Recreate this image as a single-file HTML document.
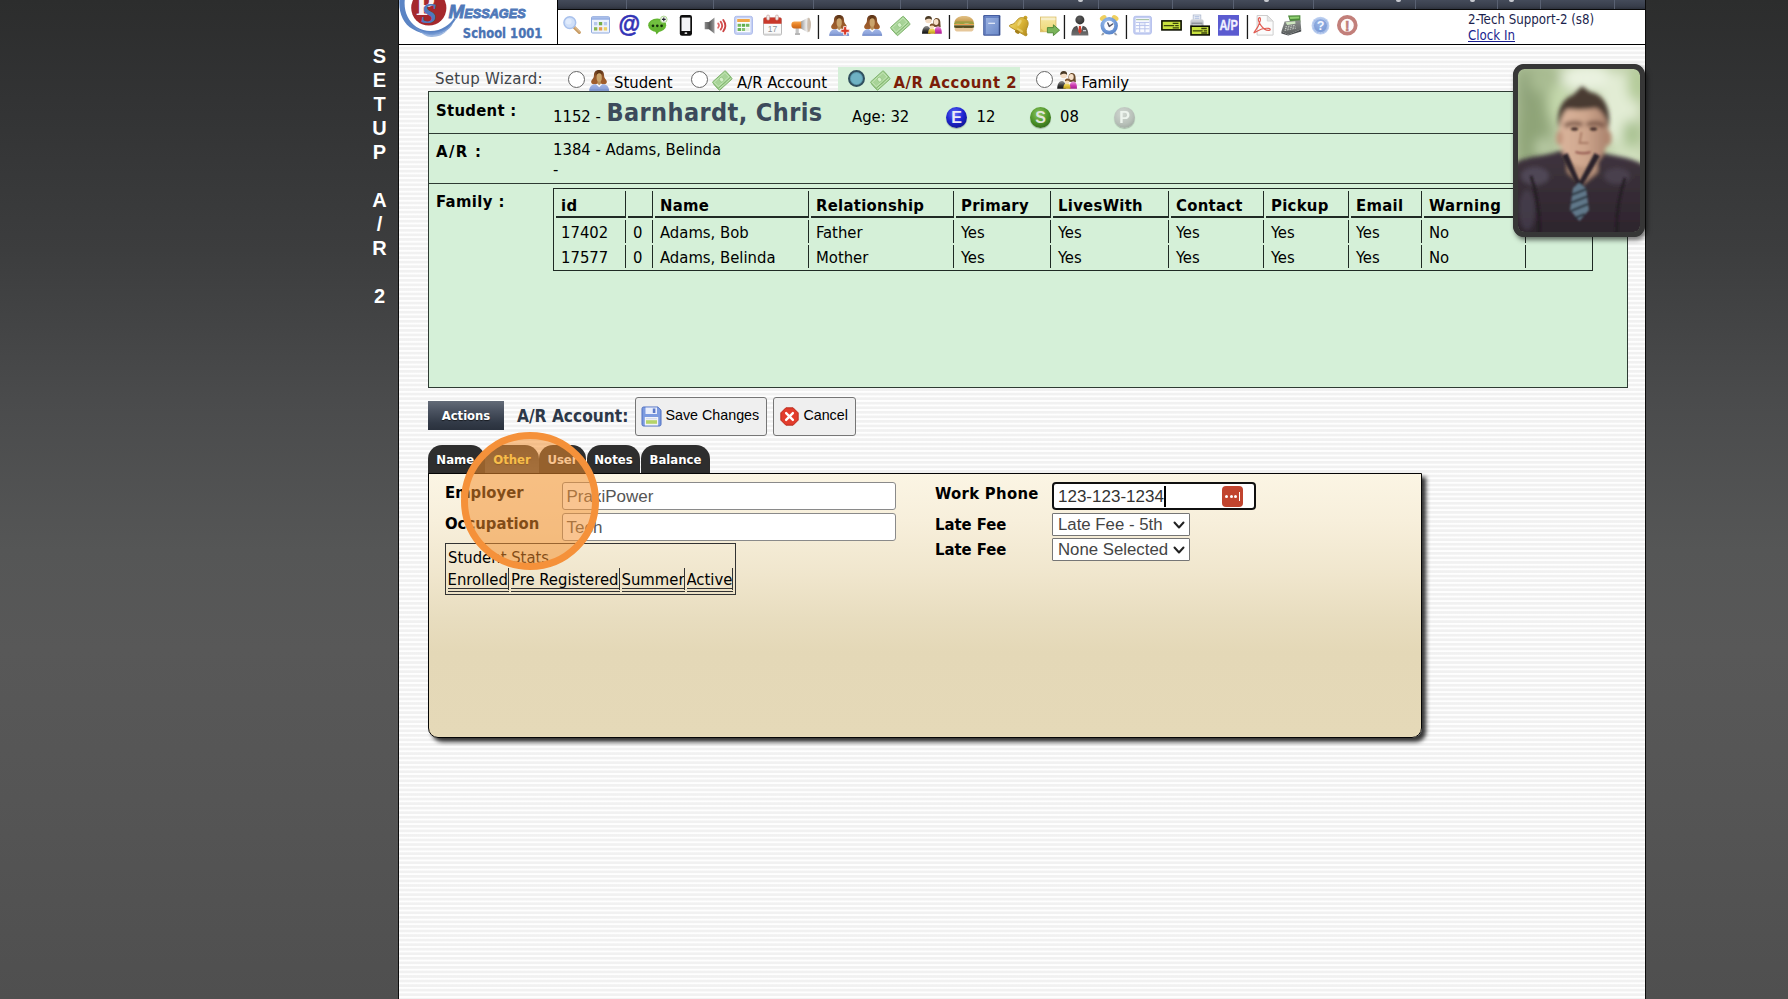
<!DOCTYPE html>
<html lang="en">
<head>
<meta charset="utf-8">
<title>Setup A/R 2</title>
<style>
*{box-sizing:border-box;margin:0;padding:0}
html,body{width:1788px;height:999px;overflow:hidden}
body{position:relative;background:linear-gradient(180deg,#2c2d2d 0px,#323334 100px,#3c3d3e 250px,#4a4b4c 400px,#555656 550px,#585858 650px,#555555 800px,#4f4f4f 999px);font-family:"DejaVu Sans Condensed","Liberation Sans",sans-serif;font-size:16px;color:#000}
.abs{position:absolute;white-space:nowrap}
#page{position:absolute;left:398px;top:0;width:1248px;height:999px;border-left:1px solid #0c0c0c;border-right:1px solid #0c0c0c;background:repeating-linear-gradient(180deg,#fefefe 0px,#fefefe 1px,#f1f1f1 1.900px,#f1f1f1 3.700px,#fefefe 4.550px)}
#side{position:absolute;left:372px;top:44px;width:15px;color:#fff;font-family:"Liberation Sans",sans-serif;font-weight:bold;font-size:20px;line-height:24px;text-align:center;word-break:break-all;overflow-wrap:anywhere;white-space:normal}
/* header */
#logo{position:absolute;left:0;top:0;width:159px;height:45px;background:#fff;border-right:1px solid #000;border-bottom:1px solid #000;overflow:hidden}
#nav{position:absolute;left:159px;top:0;width:1087px;height:10px;background:linear-gradient(180deg,#444b5a 0,#383e4b 70%,#2c313c 100%);border-bottom:1px solid #0a0a0a;overflow:hidden}
#nav i{position:absolute;top:0;width:1px;height:9px;background:#596172}
#tool{position:absolute;left:159px;top:10px;width:1087px;height:35px;background:#fff;border-bottom:1px solid #000}
.sep{position:absolute;top:6px;width:1px;height:24px;background:#222}
.ic{position:absolute;top:5px;width:24px;height:24px}
#user{position:absolute;left:910px;top:2px;font-size:13.2px;line-height:16px;color:#1b1f4d}
#user a{color:#1b1f8f;text-decoration:underline}
/* wizard */
.wz{font-size:16.5px;line-height:20px}
.radio{position:absolute;width:17px;height:17px;border:1.5px solid #666;border-radius:50%;background:#fff}
#green{position:absolute;left:29px;top:91px;width:1200px;height:297px;background:#d5f0d8;border:1px solid #2e3b33}
#green .hr{position:absolute;left:0;width:1198px;height:1px;background:#2e3b33}
.lbl{font-weight:bold;font-size:16px}
table.fam{position:absolute;left:124px;top:96px;border:1px solid #1f2a24;border-collapse:separate;border-spacing:0;font-size:16px}

#wzact{position:absolute;left:439px;top:67px;width:182px;height:25px;background:#d5f0d8}
.radio.sel{width:17px;height:17px;border:2px solid #30505f;background:#6fb2c4;box-shadow:inset 0 0 0 1px #5b9bb0}
#green #sname{left:177.5px;top:5.2px;letter-spacing:.4px;font-size:25px;font-weight:bold;color:#3c4a5b;line-height:32px}
.ball{position:absolute;width:21px;height:21px;border-radius:50%;color:#fff;font-family:"Liberation Sans",sans-serif;font-weight:bold;font-size:16px;line-height:21px;text-align:center;box-shadow:0 1px 1px rgba(0,0,0,.25)}
#green .abs{line-height:20px;font-size:16.5px}
#green .lbl{font-size:16.5px}
table.fam{table-layout:fixed;border-spacing:2px;width:1040px;font-size:16.5px}
table.fam th,table.fam td{border-right:1px solid #1f2a24;text-align:left;padding:0 0 0 5px;white-space:nowrap;overflow:hidden;line-height:20px;vertical-align:top}
table.fam th{letter-spacing:.3px;height:27px;border-bottom:2px solid #1f2a24;font-weight:bold;padding-top:5px}
table.fam td{height:22.7px;padding-top:2.9px}
table.fam .nb{border-right:none}
#photo{position:absolute;left:1114px;top:64px;width:132px;height:173px;border-radius:11px;background:#363636;box-shadow:2px 3px 5px rgba(0,0,0,.55);overflow:hidden}
#actions{position:absolute;left:29px;top:401px;width:76px;height:29px;background:linear-gradient(180deg,#636b78 0,#4a5260 35%,#323a47 75%,#2a313d 100%);color:#fff;font-weight:bold;font-size:12.900px;line-height:30px;text-align:center;text-shadow:0 1px 1px rgba(0,0,0,.6)}
#aracc{left:118px;top:405px;font-weight:bold;font-size:17.2px;line-height:22px;color:#2d3848}
.btn{position:absolute;top:397px;height:38.600px;background:#efefef;border:1px solid #767676;border-radius:3px;font-family:"Liberation Sans",sans-serif;font-size:14.3px;color:#000}
.btn span{position:absolute;top:8.2px;line-height:18px;white-space:nowrap}
.btn svg{position:absolute;left:5px;top:8px;width:21px;height:21px}
.tab{position:absolute;top:445px;height:29px;background:#2e2e2e;color:#fff;font-weight:bold;font-size:13px;line-height:29px;text-align:center;border-radius:14px 14px 0 0;text-shadow:0 1px 1px rgba(0,0,0,.5)}
.tab.on{background:linear-gradient(180deg,#383838,#505050);color:#fff06a}
#panel{position:absolute;left:29px;top:473px;width:994px;height:265px;border:1px solid #050505;border-radius:0 0 10px 10px;background:linear-gradient(180deg,#fbf5e4 0,#f7efdb 18%,#f0e6cd 38%,#e8ddbf 55%,#e4d8b7 68%,#e5d9b8 100%);box-shadow:4px 4px 4px rgba(0,0,0,.8)}
#panel>.in{position:absolute;left:1px;top:1px}
#panel .abs{font-size:16.5px;line-height:20px}
.lbl2{font-weight:bold}
.inp{position:absolute;width:334px;height:27.5px;background:#fff;border:1px solid #8a8a8a;border-radius:3px;font-family:"Liberation Sans",sans-serif;font-size:17px;color:#555}
.inp span{position:absolute;left:3.5px;top:3.6px;line-height:20px}
#stats{position:absolute;left:15px;top:68px;width:291px;height:52px;border:1px solid #333}
.sc{position:absolute;top:24px;height:24px;line-height:20px;padding-top:1.7px;font-size:16.5px;border-right:1px solid #333;border-bottom:4px double #333;white-space:nowrap;overflow:hidden}
#phone{position:absolute;left:622px;top:7px;width:204px;height:28px;background:#fff;border:2px solid #101010;border-radius:4px;font-family:"Liberation Sans",sans-serif;font-size:17px;color:#333}
#phone span{position:absolute;left:4px;top:3px;line-height:20px}
#phone .caret{position:absolute;left:110px;top:2px;width:2px;height:21px;background:#000}
#phone .pw{position:absolute;left:168px;top:2px;width:21px;height:21px;border-radius:4px;background:#c1442e}
#phone .pw u{position:absolute;top:9px;width:3px;height:3px;border-radius:50%;background:#fff}
#phone .pw u:nth-child(1){left:3px}#phone .pw u:nth-child(2){left:7.5px}#phone .pw u:nth-child(3){left:12px}
#phone .pw s{position:absolute;left:16.5px;top:6px;width:1.5px;height:9px;background:#fff}
.dd{position:absolute;left:622px;width:138px;height:23px;background:#fff;border:1px solid #767676;border-radius:1px;font-family:"Liberation Sans",sans-serif;font-size:16.8px;color:#444}
.dd span{position:absolute;left:5px;top:1px;line-height:20px;white-space:nowrap}
.dd svg{position:absolute;right:3px;top:4px;width:14px;height:14px}
#hl{position:absolute;left:61.700px;top:431.500px;width:138px;height:138px;border-radius:50%;border:7px solid #f5913a;background:rgba(244,144,45,.53)}
</style>
</head>
<body>
<div id="side">SETUP&nbsp;A/R&nbsp;2</div>
<div id="page">
  <div id="logo"><svg width="158" height="44" viewBox="0 0 158 44" style="position:absolute;left:0;top:0">
<path d="M6 -2c-1.700 11.500 2 22.500 11.500 29 9 5.600 20 5.400 29-.5 3.500-2.300 6.500-5.200 8.500-8.600l1.900 1c-2.400 4.200-5.700 7.800-9.700 10.300-10 6.200-23.500 6.300-33.200.1C3.500 23.700-.9 11 .6 -2z" fill="#5b84c4"/>
<path d="M14 25.500c8 7.500 22 9.500 33.500 3 2.600-1.500 4.800-3.200 6.500-5-1.600 3.400-4.700 6.400-8.600 8.600-10.400 5.600-24 3.600-31.400-6.600z" fill="#6b92cf" opacity=".9"/>
<path d="M20 30.500c7 4.500 19 5.400 28.500 0-4.500 4.600-10.500 6.800-16.500 6.500-4.800-.3-9-2.600-12-6.500z" fill="#7da0d6" opacity=".75"/>
<circle cx="29.800" cy="8" r="17.600" fill="#a5282c"/>
<text x="17" y="14.500" font-family="Liberation Serif,serif" font-weight="bold" font-size="31" fill="#fbf3f3">P</text>
<text x="22" y="22.500" font-family="Liberation Serif,serif" font-weight="bold" font-style="italic" font-size="29" fill="#4f78bd">S</text>
<g font-family="Liberation Sans,sans-serif" font-weight="bold" font-style="italic" fill="#5079b9" stroke="#5079b9" stroke-width=".85">
<text x="49.500" y="17.800" font-size="18.500" textLength="77.200" lengthAdjust="spacingAndGlyphs">M<tspan font-size="12.400">ESSAGES</tspan></text>
</g>
<text x="63.800" y="38" font-family="DejaVu Sans Condensed,Liberation Sans,sans-serif" font-weight="bold" font-size="13.200" fill="#4a73b3" stroke="#4a73b3" stroke-width=".3" textLength="79.500" lengthAdjust="spacingAndGlyphs">School 1001</text>
</svg></div>
  <div id="nav"><i style="left:68px"></i><i style="left:155px"></i><i style="left:255px"></i><i style="left:342px"></i><i style="left:409px"></i><i style="left:465px"></i><i style="left:540px"></i><i style="left:614px"></i><i style="left:675px"></i><i style="left:755px"></i><i style="left:857px"></i><i style="left:939px"></i><i style="left:982px"></i><i style="left:1056px"></i><b style="position:absolute;left:520px;top:0;width:5px;height:2px;background:#e8eaee;border-radius:0 0 2px 2px;opacity:.8"></b><b style="position:absolute;left:706px;top:0;width:5px;height:2px;background:#e8eaee;border-radius:0 0 2px 2px;opacity:.8"></b><b style="position:absolute;left:838px;top:0;width:5px;height:2px;background:#e8eaee;border-radius:0 0 2px 2px;opacity:.8"></b><b style="position:absolute;left:912px;top:0;width:5px;height:2px;background:#e8eaee;border-radius:0 0 2px 2px;opacity:.8"></b><b style="position:absolute;left:951px;top:0;width:5px;height:2px;background:#e8eaee;border-radius:0 0 2px 2px;opacity:.8"></b></div>
  <div id="tool">
    <svg id="icons" width="1087" height="35" viewBox="0 0 1087 35" style="position:absolute;left:0;top:0"><defs>
<linearGradient id="hair" x1="0" y1="0" x2="0" y2="1"><stop offset="0" stop-color="#5a3218"/><stop offset=".45" stop-color="#93562a"/><stop offset="1" stop-color="#a3602c"/></linearGradient>
<linearGradient id="blu" x1="0" y1="0" x2="0" y2="1"><stop offset="0" stop-color="#a6b9e8"/><stop offset="1" stop-color="#8199d4"/></linearGradient>
<linearGradient id="spk" x1="0" y1="0" x2="1" y2="0"><stop offset="0" stop-color="#8a8a8a"/><stop offset=".5" stop-color="#5a5a5a"/><stop offset="1" stop-color="#9c9c9c"/></linearGradient>
<linearGradient id="horn" x1="0" y1="0" x2="1" y2="0"><stop offset="0" stop-color="#9a9a9a"/><stop offset=".55" stop-color="#ececec"/><stop offset="1" stop-color="#b5a898"/></linearGradient>
<linearGradient id="orng" x1="0" y1="0" x2="0" y2="1"><stop offset="0" stop-color="#f7a64e"/><stop offset=".5" stop-color="#e57e22"/><stop offset="1" stop-color="#c9661a"/></linearGradient>
<linearGradient id="man" x1="0" y1="0" x2="0" y2="1"><stop offset="0" stop-color="#9a9a98"/><stop offset=".55" stop-color="#3a3a3a"/><stop offset="1" stop-color="#0e0e0e"/></linearGradient>
<linearGradient id="wom" x1="0" y1="0" x2="0" y2="1"><stop offset="0" stop-color="#e9a3dc"/><stop offset=".5" stop-color="#cf3bb4"/><stop offset="1" stop-color="#a51e8d"/></linearGradient>
<linearGradient id="kid" x1="0" y1="0" x2="0" y2="1"><stop offset="0" stop-color="#f6e28a"/><stop offset=".5" stop-color="#e0c23a"/><stop offset="1" stop-color="#b8981a"/></linearGradient>
<linearGradient id="bun" x1="0" y1="0" x2="0" y2="1"><stop offset="0" stop-color="#e2c288"/><stop offset=".6" stop-color="#cfa55c"/><stop offset="1" stop-color="#a89a48"/></linearGradient>
<linearGradient id="book" x1="0" y1="0" x2="1" y2="1"><stop offset="0" stop-color="#9db4e2"/><stop offset="1" stop-color="#6b89c8"/></linearGradient>
<linearGradient id="bell" x1="0" y1="0" x2="1" y2="0"><stop offset="0" stop-color="#ecd162"/><stop offset=".5" stop-color="#d9b436"/><stop offset="1" stop-color="#b48c1e"/></linearGradient>
<linearGradient id="note" x1="0" y1="0" x2="0" y2="1"><stop offset="0" stop-color="#f6e8a4"/><stop offset="1" stop-color="#efd878"/></linearGradient>
<radialGradient id="bhead" cx=".4" cy=".35" r=".7"><stop offset="0" stop-color="#5c5c5c"/><stop offset="1" stop-color="#2f2f2f"/></radialGradient>
<linearGradient id="suit" x1="0" y1="0" x2="0" y2="1"><stop offset="0" stop-color="#4a4a4a"/><stop offset="1" stop-color="#707070"/></linearGradient>
<radialGradient id="clk" cx=".4" cy=".3" r=".8"><stop offset="0" stop-color="#9cc0f0"/><stop offset="1" stop-color="#4f7cc4"/></radialGradient>
<linearGradient id="prn" x1="0" y1="0" x2="0" y2="1"><stop offset="0" stop-color="#d4d7dc"/><stop offset="1" stop-color="#9a9ea6"/></linearGradient>
<linearGradient id="reg" x1="0" y1="0" x2="0" y2="1"><stop offset="0" stop-color="#8a8e8c"/><stop offset="1" stop-color="#5a5e5e"/></linearGradient>
<radialGradient id="hlp" cx=".45" cy=".35" r=".75"><stop offset="0" stop-color="#9ab6e6"/><stop offset="1" stop-color="#6f90d0"/></radialGradient>
</defs><rect x="259.8" y="5" width="1.300" height="24" fill="#1a1a1a"/><rect x="390.8" y="5" width="1.300" height="24" fill="#1a1a1a"/><rect x="505.8" y="5" width="1.300" height="24" fill="#1a1a1a"/><rect x="567.8" y="5" width="1.300" height="24" fill="#1a1a1a"/><rect x="688.8" y="5" width="1.300" height="24" fill="#1a1a1a"/><g transform="translate(5.0,5.8)"><path d="M11 11.400L16.300 16.600" stroke="#c79a62" stroke-width="3.200" stroke-linecap="round"/><path d="M11.800 11.400L16.500 16" stroke="#e6c79c" stroke-width="1" stroke-linecap="round"/><circle cx="6.800" cy="6.800" r="5.900" fill="#cfdff8" stroke="#a9c1ec" stroke-width="1.500"/><circle cx="5.600" cy="5.600" r="3" fill="#e3edfc" opacity=".8"/></g><g transform="translate(33.0,6.2)"><rect x=".5" y=".5" width="18" height="16.300" rx="1" fill="#eef3fd" stroke="#8fa9dd"/><rect x="1" y="1" width="17" height="2.600" fill="#9db5e6"/><rect x="3" y="5.800" width="3.300" height="3.300" fill="#b7c8ec"/><rect x="7.900" y="5.800" width="3.300" height="3.300" fill="#74ab45"/><rect x="12.800" y="5.800" width="3.300" height="3.300" fill="#b7c8ec"/><rect x="3" y="11" width="3.300" height="3.300" fill="#86b652"/><rect x="7.900" y="11" width="3.300" height="3.300" fill="#e59a4a"/><rect x="12.800" y="11" width="3.300" height="3.300" fill="#ecd264"/></g><g transform="translate(60.8,5.0)"><text x="-.3" y="16.900" font-family="Liberation Sans,sans-serif" font-weight="bold" font-size="24.300" fill="#3333b6" stroke="#3333b6" stroke-width=".6" textLength="21.600" lengthAdjust="spacingAndGlyphs">@</text></g><g transform="translate(90.0,5.4)"><path d="M7 15.200l1.600 4 3.600-4.200z" fill="#5cae2c"/><ellipse cx="9.200" cy="9.800" rx="9" ry="6.700" fill="#63b531"/><ellipse cx="8.600" cy="7.800" rx="6.500" ry="3.200" fill="#7cc84a" opacity=".6"/><circle cx="5" cy="10.400" r="1.350" fill="#14300a"/><circle cx="9.300" cy="10.400" r="1.350" fill="#14300a"/><circle cx="13.600" cy="10.400" r="1.350" fill="#14300a"/><circle cx="15.800" cy="4" r="3.300" fill="#f4faef" stroke="#a7d48a" stroke-width=".9"/><path d="M15.800 2.100v3.800M13.900 4h3.800" stroke="#223" stroke-width="1.100"/></g><g transform="translate(121.8,5.0)"><rect x="0" y="0" width="12.200" height="20.800" rx="2.200" fill="#0e0e0e"/><rect x="1.700" y="2.600" width="8.800" height="13.400" fill="#f3f3f5"/><rect x="4.800" y="17.300" width="2.600" height="1.800" rx=".6" fill="#d8d8d8"/></g><g transform="translate(146.7,7.4)"><path d="M0 4.600h4.200L9.800 0v16.400L4.200 11.800H0z" fill="url(#spk)"/><path d="M13.40 6.01A3.4 3.4 0 0 1 13.40 10.39" fill="none" stroke="#dd6c6c" stroke-width="1.700" stroke-linecap="round"/><path d="M15.92 4.20A6.5 6.5 0 0 1 15.92 12.20" fill="none" stroke="#d45252" stroke-width="1.800" stroke-linecap="round"/><path d="M18.57 2.56A9.6 9.6 0 0 1 18.57 13.84" fill="none" stroke="#cb4343" stroke-width="1.900" stroke-linecap="round"/></g><g transform="translate(176.0,5.8)"><rect x=".5" y=".5" width="18" height="18" rx="2" fill="#c5d0f3" stroke="#aebcec"/><rect x="2.600" y="2.600" width="13.800" height="13.800" fill="#fbfcff"/><rect x="3.200" y="3.200" width="12.600" height="3" fill="#f0a648"/><rect x="3.600" y="8" width="3.400" height="3" fill="#74b85e"/><rect x="7.800" y="8" width="3.400" height="3" fill="#5fae4c"/><rect x="12" y="8" width="3.400" height="3" fill="#74b85e"/><rect x="3.600" y="12.200" width="3.400" height="3" fill="#6ab456"/><rect x="7.800" y="12.200" width="3.400" height="3" fill="#86c270"/><rect x="12" y="12.200" width="3.400" height="3" fill="#e8f0e4"/></g><g transform="translate(205.0,5.0)"><rect x=".5" y="3" width="18" height="17" rx="1.200" fill="#fafafa" stroke="#b9b9b9"/><path d="M.5 8.800V4a1.500 1.500 0 0 1 1.500-1.500h15a1.500 1.500 0 0 1 1.500 1.500v4.800z" fill="#c9382a"/><rect x="3.600" y="0" width="3" height="5.200" rx="1.400" fill="#f1e9e7" stroke="#b98a84" stroke-width=".5"/><rect x="12.400" y="0" width="3" height="5.200" rx="1.400" fill="#f1e9e7" stroke="#b98a84" stroke-width=".5"/><text x="9.500" y="17" text-anchor="middle" font-family="Liberation Sans,sans-serif" font-size="8.500" fill="#8e9498">17</text><rect x="1" y="18.600" width="17" height="1.400" fill="#cfcfcf"/></g><g transform="translate(232.8,7.4)"><rect x="4.800" y="9.800" width="3.200" height="6.600" rx=".8" fill="#c4c4c4"/><rect x="4.200" y="15.600" width="5" height="2" rx=".6" fill="#b5b5b5"/><path d="M10 4.200L17.600 0c1.900 2 2.600 5 2.300 8-.3 3-1.300 5.400-2.800 7L10 11z" fill="url(#horn)"/><ellipse cx="18.200" cy="7.600" rx="1.700" ry="7.200" fill="#c9b9a9" opacity=".8"/><path d="M.6 7.600c0-2.400 1.200-3.400 3-3.400H10.400v6.800H3.600c-1.800 0-3-1-3-3.400z" fill="url(#orng)"/></g><g transform="translate(271.0,5.0)"><path d="M10 0C6.500 0 5 2.200 5 5c0 2.500-1.200 3.600-2.200 5-1.200 1.600-.8 3.700 1.200 4.300h12c2-.6 2.400-2.700 1.200-4.300-1-1.400-2.200-2.500-2.200-5 0-2.800-1.500-5-5-5z" fill="url(#hair)"/>
<rect x="8.500" y="10.500" width="3.400" height="5.500" fill="#b8905a"/>
<ellipse cx="10.200" cy="7.400" rx="2.600" ry="4.400" fill="#caa46c"/>
<path d="M7.500 5c.9-2 4.300-2.300 5.400-.3C12.800 2.200 11.700 1 10.200 1 8.500 1 7.400 2.400 7.500 5z" fill="#5f3716"/>
<path d="M.3 20.700c0-4.200 2.300-6.100 6.200-6.700l3.700 1.700 3.700-1.700c3.900.6 6.200 2.500 6.200 6.700z" fill="url(#blu)"/>
<path d="M.3 19.600h19.800v1.100H.3z" fill="#6f87c4" opacity=".8"/>
<path d="M7.100 14.300l3.100 3 3.100-3-1.300-.7-1.800 1.700-1.800-1.700z" fill="#f6f8fc"/><path d="M14.600 11.600h3v2.700h2.700v3h-2.700v2.700h-3v-2.700h-2.700v-3h2.700z" fill="#d93a28" stroke="#fbeeee" stroke-width=".9"/></g><g transform="translate(304.0,5.0)"><path d="M10 0C6.500 0 5 2.200 5 5c0 2.500-1.200 3.600-2.200 5-1.200 1.600-.8 3.700 1.200 4.300h12c2-.6 2.400-2.700 1.200-4.300-1-1.400-2.200-2.500-2.200-5 0-2.800-1.500-5-5-5z" fill="url(#hair)"/>
<rect x="8.500" y="10.500" width="3.400" height="5.500" fill="#b8905a"/>
<ellipse cx="10.200" cy="7.400" rx="2.600" ry="4.400" fill="#caa46c"/>
<path d="M7.500 5c.9-2 4.300-2.300 5.400-.3C12.800 2.200 11.700 1 10.200 1 8.500 1 7.400 2.400 7.500 5z" fill="#5f3716"/>
<path d="M.3 20.700c0-4.200 2.300-6.100 6.200-6.700l3.700 1.700 3.700-1.700c3.900.6 6.200 2.500 6.200 6.700z" fill="url(#blu)"/>
<path d="M.3 19.600h19.800v1.100H.3z" fill="#6f87c4" opacity=".8"/>
<path d="M7.100 14.300l3.100 3 3.100-3-1.300-.7-1.800 1.700-1.800-1.700z" fill="#f6f8fc"/></g><g transform="translate(332.0,5.4)"><g transform="translate(11,11.400) rotate(-42)"><rect x="-8.700" y="-4.300" width="17.400" height="8.600" rx=".7" fill="#a7d397" stroke="#7fb36c" stroke-width=".9"/><rect x="-7.200" y="-2.900" width="14.400" height="5.800" fill="none" stroke="#c6e6b8" stroke-width=".8"/><ellipse cx="0" cy="0" rx="2.100" ry="2.500" fill="#d4efc8" stroke="#86bd74" stroke-width=".6"/></g><g transform="translate(9.600,9.600) rotate(-42)"><rect x="-8.700" y="-4.300" width="17.400" height="8.600" rx=".7" fill="#a7d397" stroke="#7fb36c" stroke-width=".9"/><rect x="-7.200" y="-2.900" width="14.400" height="5.800" fill="none" stroke="#c6e6b8" stroke-width=".8"/><ellipse cx="0" cy="0" rx="2.100" ry="2.500" fill="#d4efc8" stroke="#86bd74" stroke-width=".6"/></g></g><g transform="translate(363.8,6.0)"><path d="M.2 17.800C.2 12.600 2.400 10 4.900 10c2.400 0 3.800 2.200 3.800 7.800z" fill="url(#man)"/>
<circle cx="6.700" cy="4" r="3.300" fill="#f3dcc4"/><path d="M3.300 4.100C2.900 1.400 4.700-.1 6.900 0c2.200.1 3.500 1.500 3.200 3.800-1.300-1.200-4-1.700-6.800.3z" fill="#4a3a26"/>
<path d="M11.600 8.200c-.5-4 1-6.200 3.400-6.100 2.700.1 3.800 2.400 3.600 5.600l.3 3.600-2.300-.6-4.600.2z" fill="#6a4a2a"/><ellipse cx="14.300" cy="6" rx="2.400" ry="2.900" fill="#f6e0c8"/>
<path d="M12.500 17.800c0-5 1.500-7.200 3.800-7.200 2.400 0 3.700 2.300 3.700 7.200z" fill="url(#wom)"/>
<path d="M6.300 17.800c0-3.900 1.400-5.600 3.700-5.600s3.500 1.700 3.500 5.600z" fill="url(#kid)"/><circle cx="10.200" cy="10.400" r="2.250" fill="#f6dcb8"/><path d="M7.900 10.200c0-1.900 1.100-2.800 2.400-2.700 1.400.1 2.300 1 2.200 2.800-1.100-1-2.900-1.200-4.600-.1z" fill="#7a4e26"/></g><g transform="translate(395.9,5.8)"><path d="M.4 7.600C.4 2.800 4.400.2 10.200.2s9.800 2.600 9.800 7.400z" fill="url(#bun)"/><path d="M2 5.500h16.500l1.300 2.100H.6z" fill="#8f9a3c" opacity=".55"/><path d="M.2 7.400c2-.8 3.500.6 5 0s3-.8 5 0 3.200.7 5 0 3.200-.8 5 0v1.600H.2z" fill="#9aa23e"/><rect x=".4" y="8.200" width="19.600" height="1.300" fill="#f2c25a"/><rect x=".8" y="8.500" width="18.800" height=".6" fill="#e8784a" opacity=".8"/><path d="M.2 9.500h20v2.300c-1.800.8-3.200.1-5 .6s-3 .2-5-.3-3.200.6-5 .2-3.400.2-5-.5z" fill="#56632a"/><rect x=".8" y="10.300" width="18.600" height="1.500" rx=".7" fill="#5c4320" opacity=".85"/><path d="M.8 12.200h18.800v1.200c0 1.500-1.400 2.300-3.200 2.300H4c-1.800 0-3.200-.8-3.200-2.300z" fill="#e6c79a"/></g><g transform="translate(425.2,5.0)"><rect x="0" y="0" width="17.200" height="20.800" rx="1.200" fill="#425a9c"/><rect x="1.300" y="2.600" width="14.600" height="16.900" fill="url(#book)"/><rect x="1.300" y=".9" width="15" height="1.900" fill="#6a86c8"/><rect x="1.300" y="2.600" width="1.400" height="16.900" fill="#5b76ba" opacity=".8"/><rect x="5" y="7.700" width="6.800" height="1.200" fill="#e6edfa"/><rect x="15.600" y="1" width="1" height="18.800" fill="#34497f"/></g><g transform="translate(453.0,5.0)"><g transform="rotate(30 10 10.500)"><circle cx="10" cy="1.600" r="2" fill="#c9a22a"/><path d="M10 2.400c-4 0-6 2.800-6.200 6.200-.2 3.200-1.400 5-3.200 6.400-1 .8-.6 2.200.8 2.200h17.200c1.400 0 1.800-1.400.8-2.200-1.800-1.400-3-3.200-3.200-6.400-.2-3.400-2.200-6.200-6.200-6.200z" fill="url(#bell)" stroke="#ad8a1e" stroke-width=".8"/><ellipse cx="10" cy="17.800" rx="2.600" ry="1.700" fill="#a5801a"/><ellipse cx="7.400" cy="9" rx="1.400" ry="3.400" fill="#f6e89a" opacity=".55"/><ellipse cx="11.500" cy="15.200" rx="3.500" ry="1.100" fill="#f3e08a" opacity=".55"/></g></g><g transform="translate(482.0,5.8)"><rect x=".5" y="1.300" width="15.400" height="14.600" fill="url(#note)" stroke="#dcc070"/><rect x="1" y="1.800" width="14.400" height="2.600" fill="#f8efc8"/><path d="M1 12.600l3.400 3H1z" fill="#dcc060"/><path d="M7.400 11.800h6V9l6.200 5.400-6.200 5.400V17h-6z" fill="#7ab45a" stroke="#4c8532" stroke-width=".9" stroke-linejoin="round"/></g><g transform="translate(513.4,5.0)"><circle cx="8.500" cy="4.900" r="4.500" fill="url(#bhead)"/><path d="M0 20.400c0-5.800 2-8.800 5.600-9.600l2.900 1.600 2.900-1.600c3.600.8 5.600 3.800 5.600 9.600z" fill="url(#suit)"/><path d="M5.800 10.900l2.700 8 2.700-8-1.300-.8H7.100z" fill="#f3f3f3"/><path d="M7.600 11h1.800l.8 5.200-1.700 3-1.700-3z" fill="#d23b2b"/><rect x="11.600" y="15" width="3" height="1.300" fill="#c9ccd2"/></g><g transform="translate(541.2,5.0)"><path d="M3.600 17.600l-1.800 2.600h2.200l1.400-1.800zM16.400 17.600l1.800 2.600H16l-1.400-1.800z" fill="#9a9fa8"/><ellipse cx="4" cy="3" rx="3.600" ry="2.500" transform="rotate(-35 4 3)" fill="#efd060"/><ellipse cx="16" cy="3" rx="3.600" ry="2.500" transform="rotate(35 16 3)" fill="#efd060"/><circle cx="10" cy="10.800" r="8.700" fill="url(#clk)"/><circle cx="10" cy="10.800" r="5" fill="#fbfcff"/><path d="M8.600 8l1.500 3.400 3.400-2.400" fill="none" stroke="#50556a" stroke-width="1.500" stroke-linecap="round" stroke-linejoin="round"/></g><g transform="translate(575.3,5.8)"><rect x=".5" y=".5" width="17.600" height="17.800" rx="1.800" fill="#c3cdf2" stroke="#b3bfec"/><rect x="2.400" y="2.400" width="13.800" height="14" fill="#fbfcff"/><rect x="2.800" y="3.200" width="13" height="1.200" fill="#a9c3a6"/><path d="M2.600 6.600h13.400M2.600 9.800h13.400M2.600 13h13.400M6.400 6.600v9.600M11.600 6.600v9.600" stroke="#b7c2ec" stroke-width="1"/><rect x="7.200" y="7.400" width="3.600" height="1.600" fill="#dfe5f8"/></g><g transform="translate(603.1,10.1)"><rect x=".8" y=".8" width="19.2" height="9.0" fill="#c9e23f" stroke="#0c0f00" stroke-width="1.600"/><path d="M11.6 3.2h5.8M2.7 5.5h10.4M14.1 5.5h3.5M11.6 7.8h6.2" stroke="#2a3208" stroke-width="1.300" fill="none" opacity=".9"/></g><g transform="translate(632.0,5.0)"><rect x="3.200" y="0" width="7.600" height="5.600" fill="#f2f5fb" stroke="#aab6cc" stroke-width=".8"/><path d="M4.600 1.700h4.800M4.600 3.300h4.800" stroke="#9db0d8" stroke-width=".8"/><path d="M.4 6.400c0-1.300.8-2.200 2.100-2.200h9c1.300 0 2.100.9 2.100 2.200v7H.4z" fill="url(#prn)"/><rect x="1.600" y="7.600" width="10.800" height="1.500" fill="#8f949c"/><rect x="2.600" y="9.700" width="8.800" height="1.300" fill="#eef0f4"/><g transform="translate(0.200,10.400)"><rect x=".8" y=".8" width="18.2" height="8.7" fill="#c9e23f" stroke="#0c0f00" stroke-width="1.600"/><path d="M11.1 3.1h5.5M2.6 5.4h9.9M13.5 5.4h3.4M11.1 7.6h5.9" stroke="#2a3208" stroke-width="1.300" fill="none" opacity=".9"/></g></g><g transform="translate(660.0,5.0)"><rect x="0" y="0" width="21" height="20.700" fill="#5b5bd0"/><text x="10.600" y="15" text-anchor="middle" font-family="Liberation Sans,sans-serif" font-weight="bold" font-size="13.800" fill="#f1f1ff" stroke="#f1f1ff" stroke-width=".35" textLength="18.400" lengthAdjust="spacingAndGlyphs">A/P</text></g><g transform="translate(695.5,5.0)"><path d="M3.600.5h10.200l5.800 5.600v14H3.600z" fill="#fbfbfb" stroke="#cdcdcd"/><path d="M13.800.5v5.600h5.800z" fill="#e6e6e6" stroke="#cdcdcd" stroke-width=".7"/><path d="M.6 17.400c2.400-3 5.200-7.600 6.200-11.800.5-2.200-.4-3.600-1.400-2.600-.9 1-.2 4.200 2 7.400 2.200 3.200 5.600 5.200 8.200 5 1.700-.2 1.500-1.700-.4-2-3.200-.5-8.400.8-12.200 3.200-1.700 1.100-3 1.600-2.400.8z" fill="none" stroke="#de4a40" stroke-width="1.150" stroke-linejoin="round" opacity=".9"/></g><g transform="translate(723.0,5.0)"><path d="M7 .6l12.400-.4v7.400l-9.600 1.200z" fill="#4d8a3c"/><path d="M8.600 1.700l9.600-.3v2l-9 .6z" fill="#8fd070"/><path d="M3.600 6.400l15.800-1.200.8 9-13 5.600-6.800-3.400z" fill="url(#reg)"/><path d="M4.600 7.200l9.600-.9.300 2.500-8.400 1.300z" fill="#cfe8c0"/><path d="M.4 16.400l6.800 3.400 13-5.600v2.400l-13 3.800-6.800-2z" fill="#4a4e50"/><path d="M4.400 11.800l10-1.600M4 13.600l10.600-1.900M3.600 15.400l11.200-2.200" stroke="#c6cac4" stroke-width="1" stroke-dasharray="1.600 1"/></g><g transform="translate(753.4,6.6)"><circle cx="9.050" cy="9.050" r="8.900" fill="#bccff0"/><circle cx="9.050" cy="9.050" r="7.500" fill="url(#hlp)"/><circle cx="9.050" cy="9.050" r="7" fill="none" stroke="#d6e3f8" stroke-width=".8" opacity=".8"/><text x="9.100" y="13.500" text-anchor="middle" font-family="Liberation Sans,sans-serif" font-weight="bold" font-size="12.500" fill="#f4f8ff">?</text></g><g transform="translate(779.0,5.0)"><circle cx="10.300" cy="10.300" r="8.400" fill="#fdfafa" stroke="#c27f7a" stroke-width="3.800"/><text x="10.300" y="15.600" text-anchor="middle" font-family="Liberation Sans,sans-serif" font-weight="bold" font-size="15" fill="#c27f7a" stroke="#c27f7a" stroke-width=".5">!</text></g></svg>
    <div id="user">2-Tech Support-2 (s8)<br><a>Clock In</a></div>
  </div>

  <!-- wizard row -->
  <div class="abs wz" style="left:36px;top:68.800px;color:#3f4449;font-family:'DejaVu Sans',sans-serif;font-size:15px;letter-spacing:.25px">Setup Wizard:</div>
  <div id="wzact"></div>
  <div class="radio" style="left:169px;top:71px"></div>
  <div class="abs wz" style="left:215px;top:73px">Student</div>
  <div class="radio" style="left:292px;top:71px"></div>
  <div class="abs wz" style="left:338px;top:73px">A/R Account</div>
  <div class="radio sel" style="left:449px;top:70px"></div>
  <div class="abs wz" style="left:494.5px;top:73px;font-weight:bold;color:#7a1d08;letter-spacing:.55px">A/R Account 2</div>
  <div class="radio" style="left:637px;top:71px"></div>
  <div class="abs wz" style="left:682.5px;top:73px">Family</div>
  <svg class="wzi" width="21" height="21" viewBox="0 0 21 21" style="position:absolute;left:189.7px;top:69.9px;overflow:visible"><path d="M10 0C6.500 0 5 2.200 5 5c0 2.500-1.200 3.600-2.200 5-1.200 1.600-.8 3.700 1.200 4.300h12c2-.6 2.400-2.700 1.200-4.300-1-1.400-2.200-2.500-2.200-5 0-2.800-1.500-5-5-5z" fill="url(#hair)"/>
<rect x="8.500" y="10.500" width="3.400" height="5.500" fill="#b8905a"/>
<ellipse cx="10.200" cy="7.400" rx="2.600" ry="4.400" fill="#caa46c"/>
<path d="M7.500 5c.9-2 4.300-2.300 5.400-.3C12.800 2.200 11.700 1 10.200 1 8.500 1 7.400 2.400 7.500 5z" fill="#5f3716"/>
<path d="M.3 20.700c0-4.200 2.300-6.100 6.200-6.700l3.700 1.700 3.700-1.700c3.900.6 6.200 2.500 6.200 6.700z" fill="url(#blu)"/>
<path d="M.3 19.600h19.800v1.100H.3z" fill="#6f87c4" opacity=".8"/>
<path d="M7.100 14.300l3.100 3 3.100-3-1.300-.7-1.800 1.700-1.800-1.700z" fill="#f6f8fc"/></svg><svg class="wzi" width="21" height="21" viewBox="0 0 21 21" style="position:absolute;left:313.0px;top:70.4px;overflow:visible"><g transform="translate(11,11.400) rotate(-42)"><rect x="-8.700" y="-4.300" width="17.400" height="8.600" rx=".7" fill="#a7d397" stroke="#7fb36c" stroke-width=".9"/><rect x="-7.200" y="-2.900" width="14.400" height="5.800" fill="none" stroke="#c6e6b8" stroke-width=".8"/><ellipse cx="0" cy="0" rx="2.100" ry="2.500" fill="#d4efc8" stroke="#86bd74" stroke-width=".6"/></g><g transform="translate(9.600,9.600) rotate(-42)"><rect x="-8.700" y="-4.300" width="17.400" height="8.600" rx=".7" fill="#a7d397" stroke="#7fb36c" stroke-width=".9"/><rect x="-7.200" y="-2.900" width="14.400" height="5.800" fill="none" stroke="#c6e6b8" stroke-width=".8"/><ellipse cx="0" cy="0" rx="2.100" ry="2.500" fill="#d4efc8" stroke="#86bd74" stroke-width=".6"/></g></svg><svg class="wzi" width="21" height="21" viewBox="0 0 21 21" style="position:absolute;left:471.0px;top:70.4px;overflow:visible"><g transform="translate(11,11.400) rotate(-42)"><rect x="-8.700" y="-4.300" width="17.400" height="8.600" rx=".7" fill="#a7d397" stroke="#7fb36c" stroke-width=".9"/><rect x="-7.200" y="-2.900" width="14.400" height="5.800" fill="none" stroke="#c6e6b8" stroke-width=".8"/><ellipse cx="0" cy="0" rx="2.100" ry="2.500" fill="#d4efc8" stroke="#86bd74" stroke-width=".6"/></g><g transform="translate(9.600,9.600) rotate(-42)"><rect x="-8.700" y="-4.300" width="17.400" height="8.600" rx=".7" fill="#a7d397" stroke="#7fb36c" stroke-width=".9"/><rect x="-7.200" y="-2.900" width="14.400" height="5.800" fill="none" stroke="#c6e6b8" stroke-width=".8"/><ellipse cx="0" cy="0" rx="2.100" ry="2.500" fill="#d4efc8" stroke="#86bd74" stroke-width=".6"/></g></svg><svg class="wzi" width="21" height="21" viewBox="0 0 21 21" style="position:absolute;left:658.0px;top:71.0px;overflow:visible"><path d="M.2 17.800C.2 12.600 2.400 10 4.900 10c2.400 0 3.800 2.200 3.800 7.800z" fill="url(#man)"/>
<circle cx="6.700" cy="4" r="3.300" fill="#f3dcc4"/><path d="M3.300 4.100C2.900 1.400 4.700-.1 6.900 0c2.200.1 3.500 1.500 3.200 3.800-1.300-1.200-4-1.700-6.800.3z" fill="#4a3a26"/>
<path d="M11.600 8.200c-.5-4 1-6.200 3.400-6.100 2.700.1 3.800 2.400 3.600 5.600l.3 3.600-2.300-.6-4.600.2z" fill="#6a4a2a"/><ellipse cx="14.300" cy="6" rx="2.400" ry="2.900" fill="#f6e0c8"/>
<path d="M12.500 17.800c0-5 1.500-7.200 3.800-7.200 2.400 0 3.700 2.300 3.700 7.200z" fill="url(#wom)"/>
<path d="M6.300 17.800c0-3.900 1.400-5.600 3.700-5.600s3.500 1.700 3.500 5.600z" fill="url(#kid)"/><circle cx="10.200" cy="10.400" r="2.250" fill="#f6dcb8"/><path d="M7.900 10.200c0-1.900 1.100-2.800 2.400-2.700 1.400.1 2.300 1 2.200 2.800-1.100-1-2.900-1.200-4.600-.1z" fill="#7a4e26"/></svg>

  <div id="green">
    <div class="hr" style="top:41px"></div>
    <div class="hr" style="top:91px"></div>
    <div class="abs lbl" style="left:7px;top:8.5px;letter-spacing:.3px">Student :</div>
    <div class="abs" style="left:124px;top:15px">1152 - </div>
    <div class="abs" id="sname">Barnhardt, Chris</div>
    <div class="abs" style="left:423px;top:15px">Age: 32</div>
    <div class="ball" style="left:517px;top:15px;background:radial-gradient(circle at 42% 32%,#5f6cf6 0,#2026d2 45%,#0c1080 88%,#1a1f8a 100%);color:#ebebf6">E</div>
    <div class="abs" style="left:547.5px;top:15px">12</div>
    <div class="ball" style="left:601px;top:15px;background:radial-gradient(circle at 42% 32%,#8fc860 0,#4c9228 50%,#2a5c14 90%,#3a7020 100%);color:#e2e6de">S</div>
    <div class="abs" style="left:631px;top:15px">08</div>
    <div class="ball" style="left:685px;top:15px;background:radial-gradient(circle at 42% 32%,#d2d6d2 0,#b4bab5 55%,#8f9791 92%,#a9b0ab 100%);color:#f1f5f1;opacity:.88">P</div>
    <div class="abs lbl" style="left:7px;top:50px;letter-spacing:1.400px">A/R :</div>
    <div class="abs" style="left:124px;top:48px">1384 - Adams, Belinda</div>
    <div class="abs" style="left:124px;top:67.5px">-</div>
    <div class="abs lbl" style="left:7px;top:100px;letter-spacing:.4px">Family :</div>
    <table class="fam">
      <colgroup><col style="width:70px"><col style="width:25px"><col style="width:154px"><col style="width:143px"><col style="width:95px"><col style="width:116px"><col style="width:93px"><col style="width:83px"><col style="width:71px"><col style="width:102px"><col style="width:62px"></colgroup>
      <tr class="h"><th>id</th><th></th><th>Name</th><th>Relationship</th><th>Primary</th><th>LivesWith</th><th>Contact</th><th>Pickup</th><th>Email</th><th>Warning</th><th class="nb"></th></tr>
      <tr><td>17402</td><td>0</td><td>Adams, Bob</td><td>Father</td><td>Yes</td><td>Yes</td><td>Yes</td><td>Yes</td><td>Yes</td><td>No</td><td class="nb"></td></tr>
      <tr><td>17577</td><td>0</td><td>Adams, Belinda</td><td>Mother</td><td>Yes</td><td>Yes</td><td>Yes</td><td>Yes</td><td>Yes</td><td>No</td><td class="nb"></td></tr>
    </table>
  </div>

  <!-- photo -->
  <div id="photo"><svg width="132" height="173" viewBox="0 0 132 173" style="position:absolute;left:0;top:0">
<defs>
<filter id="b6" x="-20%" y="-20%" width="140%" height="140%"><feGaussianBlur stdDeviation="6"/></filter>
<filter id="b3" x="-20%" y="-20%" width="140%" height="140%"><feGaussianBlur stdDeviation="2.200"/></filter>
<filter id="b1" x="-20%" y="-20%" width="140%" height="140%"><feGaussianBlur stdDeviation="1.300"/></filter>
<clipPath id="pc"><rect x="5" y="5" width="122" height="163" rx="6"/></clipPath>
<linearGradient id="shirt" x1="0" y1="0" x2="0" y2="1"><stop offset="0" stop-color="#40353f"/><stop offset="1" stop-color="#2b232b"/></linearGradient>
<linearGradient id="skin" x1="0" y1="0" x2="1" y2="0"><stop offset="0" stop-color="#dbb59d"/><stop offset=".55" stop-color="#cda58c"/><stop offset="1" stop-color="#a9826d"/></linearGradient>
</defs>
<g clip-path="url(#pc)">
<rect x="5" y="5" width="122" height="163" fill="#c0d0aa"/>
<g filter="url(#b6)">
<rect x="0" y="0" width="42" height="130" fill="#a0b48a"/>
<ellipse cx="20" cy="70" rx="14" ry="44" fill="#8fa478"/>
<ellipse cx="34" cy="16" rx="16" ry="12" fill="#a9bc92"/>
<ellipse cx="74" cy="14" rx="26" ry="14" fill="#eaf2e0"/>
<ellipse cx="106" cy="44" rx="20" ry="36" fill="#e2ecd4"/>
<ellipse cx="114" cy="98" rx="16" ry="24" fill="#d2e1bf"/>
<ellipse cx="46" cy="40" rx="10" ry="20" fill="#c4d8ac"/>
<ellipse cx="124" cy="20" rx="10" ry="18" fill="#b4cb99"/><ellipse cx="118" cy="70" rx="9" ry="14" fill="#a9c292"/><ellipse cx="12" cy="30" rx="5" ry="22" fill="#8ea27a"/><ellipse cx="30" cy="84" rx="8" ry="10" fill="#b9cba5"/>
</g>
<g filter="url(#b3)">
<path d="M-2 178V101c8-5 18-8 28-9 6-1 10-2 14-3l12-4h30l12 5c5 1 10 2 15 3 10 2 18 5 25 10v75z" fill="url(#shirt)"/><ellipse cx="22" cy="112" rx="14" ry="9" fill="#5a5162" opacity=".7"/><ellipse cx="104" cy="112" rx="13" ry="8" fill="#544b5c" opacity=".6"/><ellipse cx="14" cy="146" rx="8" ry="20" fill="#4e4656" opacity=".6"/>
<g transform="translate(4.500,10)">
<path d="M50 72h30v26l-15 12-15-12z" fill="#b8917a"/>
<ellipse cx="66" cy="59" rx="25" ry="34" fill="url(#skin)"/>
<ellipse cx="42" cy="64" rx="3.500" ry="7.500" fill="#c2967e"/>
<ellipse cx="90.500" cy="64" rx="3.500" ry="7.500" fill="#b08670"/>
<path d="M41.500 55c-4-20 5-31 14-34l9-9 8 6c13 2 22 15 18.500 37-2-12-7-19-13-21-9 2-21 2-28 1-4 3-7 10-8.500 20z" fill="#4a3a31"/>
<path d="M47 52q9-5 18-1M69 51q9-4 18 1" stroke="#6b4a3c" stroke-width="5" fill="none" opacity=".8"/>
</g>
</g>
<g filter="url(#b1)">
<g transform="translate(4.500,10)">
<ellipse cx="57" cy="55" rx="3.600" ry="1.700" fill="#3f2c26"/><ellipse cx="76" cy="55" rx="3.600" ry="1.700" fill="#3f2c26"/>
<path d="M64 58l-2 11h9" stroke="#a97c66" stroke-width="1.800" fill="none"/>
<path d="M58 78q8 2.500 15 0" stroke="#93584f" stroke-width="2" fill="none"/>
</g>
<path d="M49 92l17.500 35 20.500-35-5.500-3-15 28-12-28z" fill="#2a2229"/>
<path d="M60 124l6-5 7 5 3 22-9.500 11-9.500-11z" fill="#61788a"/>
<path d="M58.500 131l15-6M57.500 139l18-7M58 147l17-7M62 154l10-4" stroke="#27313b" stroke-width="2.300"/>
<path d="M18 112q10 30 8 60M112 114q-10 30-8 60" stroke="#231b22" stroke-width="2.500" fill="none"/>
</g>
</g>
<rect x="2.500" y="2.500" width="127" height="168" rx="9" fill="none" stroke="#363636" stroke-width="5"/>
</svg></div>

  <!-- actions row -->
  <div id="actions">Actions</div>
  <div class="abs" id="aracc">A/R Account:</div>
  <div class="btn" style="left:236px;width:132px"><svg viewBox="0 0 21 21"><path d="M1 2.500C1 1.700 1.700 1 2.500 1h14.300L20 4.200V18.500c0 .8-.7 1.500-1.500 1.500h-16C1.700 20 1 19.300 1 18.500z" fill="#7c9be0" stroke="#4f6fc0" stroke-width="1"/><rect x="4.500" y="1.500" width="11.500" height="6.500" fill="#e9eefb"/><rect x="11.800" y="2.500" width="2.600" height="4.500" fill="#5a78c8"/><rect x="3.800" y="11" width="13.400" height="8.500" fill="#f2f4f8"/><rect x="5" y="14.200" width="11" height="3.600" fill="#b5d46a"/><rect x="5" y="12.200" width="11" height="1" fill="#cfd6e6"/></svg><span style="left:29.400px">Save Changes</span></div>
  <div class="btn" style="left:374px;width:83px"><svg viewBox="-1 -1 23 23"><path d="M6.500 1h8L20 6.500v8L14.500 20h-8L1 14.500v-8z" fill="#e23c2c" stroke="#b52618" stroke-width="1"/><path d="M6.800 6.800l7.400 7.400M14.200 6.800l-7.400 7.400" stroke="#fff" stroke-width="2.600" stroke-linecap="round"/></svg><span style="left:29.400px">Cancel</span></div>

  <!-- tabs -->
  <div class="tab" style="left:29px;width:57px;padding-right:2.5px">Name</div>
  <div class="tab on" style="left:86px;width:54px">Other</div>
  <div class="tab" style="left:140px;width:47px">User</div>
  <div class="tab" style="left:188px;width:53px">Notes</div>
  <div class="tab" style="left:242px;width:69px">Balance</div>

  <div id="panel"><div class="in">
    <div class="abs lbl2" style="left:15px;top:8.4px">Employer</div>
    <div class="inp" style="left:132px;top:7px"><span>PraxiPower</span></div>
    <div class="abs lbl2" style="left:15px;top:39.2px">Occupation</div>
    <div class="inp" style="left:132px;top:38px"><span>Tech</span></div>
    <div id="stats">
      <div class="abs" style="left:2px;top:4px">Student Stats</div>
      <div class="sc" style="left:1.5px;width:61.5px">Enrolled</div>
      <div class="sc" style="left:65px;width:108.5px">Pre Registered</div>
      <div class="sc" style="left:175.5px;width:63px">Summer</div>
      <div class="sc" style="left:240.5px;width:46.5px">Active</div>
    </div>
    <div class="abs lbl2" style="left:505px;top:8.6px;letter-spacing:.3px">Work Phone</div>
    <div id="phone"><span>123-123-1234</span><i class="caret"></i><b class="pw"><u></u><u></u><u></u><s></s></b></div>
    <div class="abs lbl2" style="left:505px;top:39.600px">Late Fee</div>
    <div class="dd" style="top:38px"><span>Late Fee - 5th</span><svg viewBox="0 0 14 14"><path d="M2.5 4.5 L7 9.5 L11.5 4.5" fill="none" stroke="#222" stroke-width="2" stroke-linecap="round" stroke-linejoin="round"/></svg></div>
    <div class="abs lbl2" style="left:505px;top:64.600px">Late Fee</div>
    <div class="dd" style="top:63px"><span>None Selected</span><svg viewBox="0 0 14 14"><path d="M2.5 4.5 L7 9.5 L11.5 4.5" fill="none" stroke="#222" stroke-width="2" stroke-linecap="round" stroke-linejoin="round"/></svg></div>
  </div></div>
  <div id="hl"></div>
</div>
</body>
</html>
